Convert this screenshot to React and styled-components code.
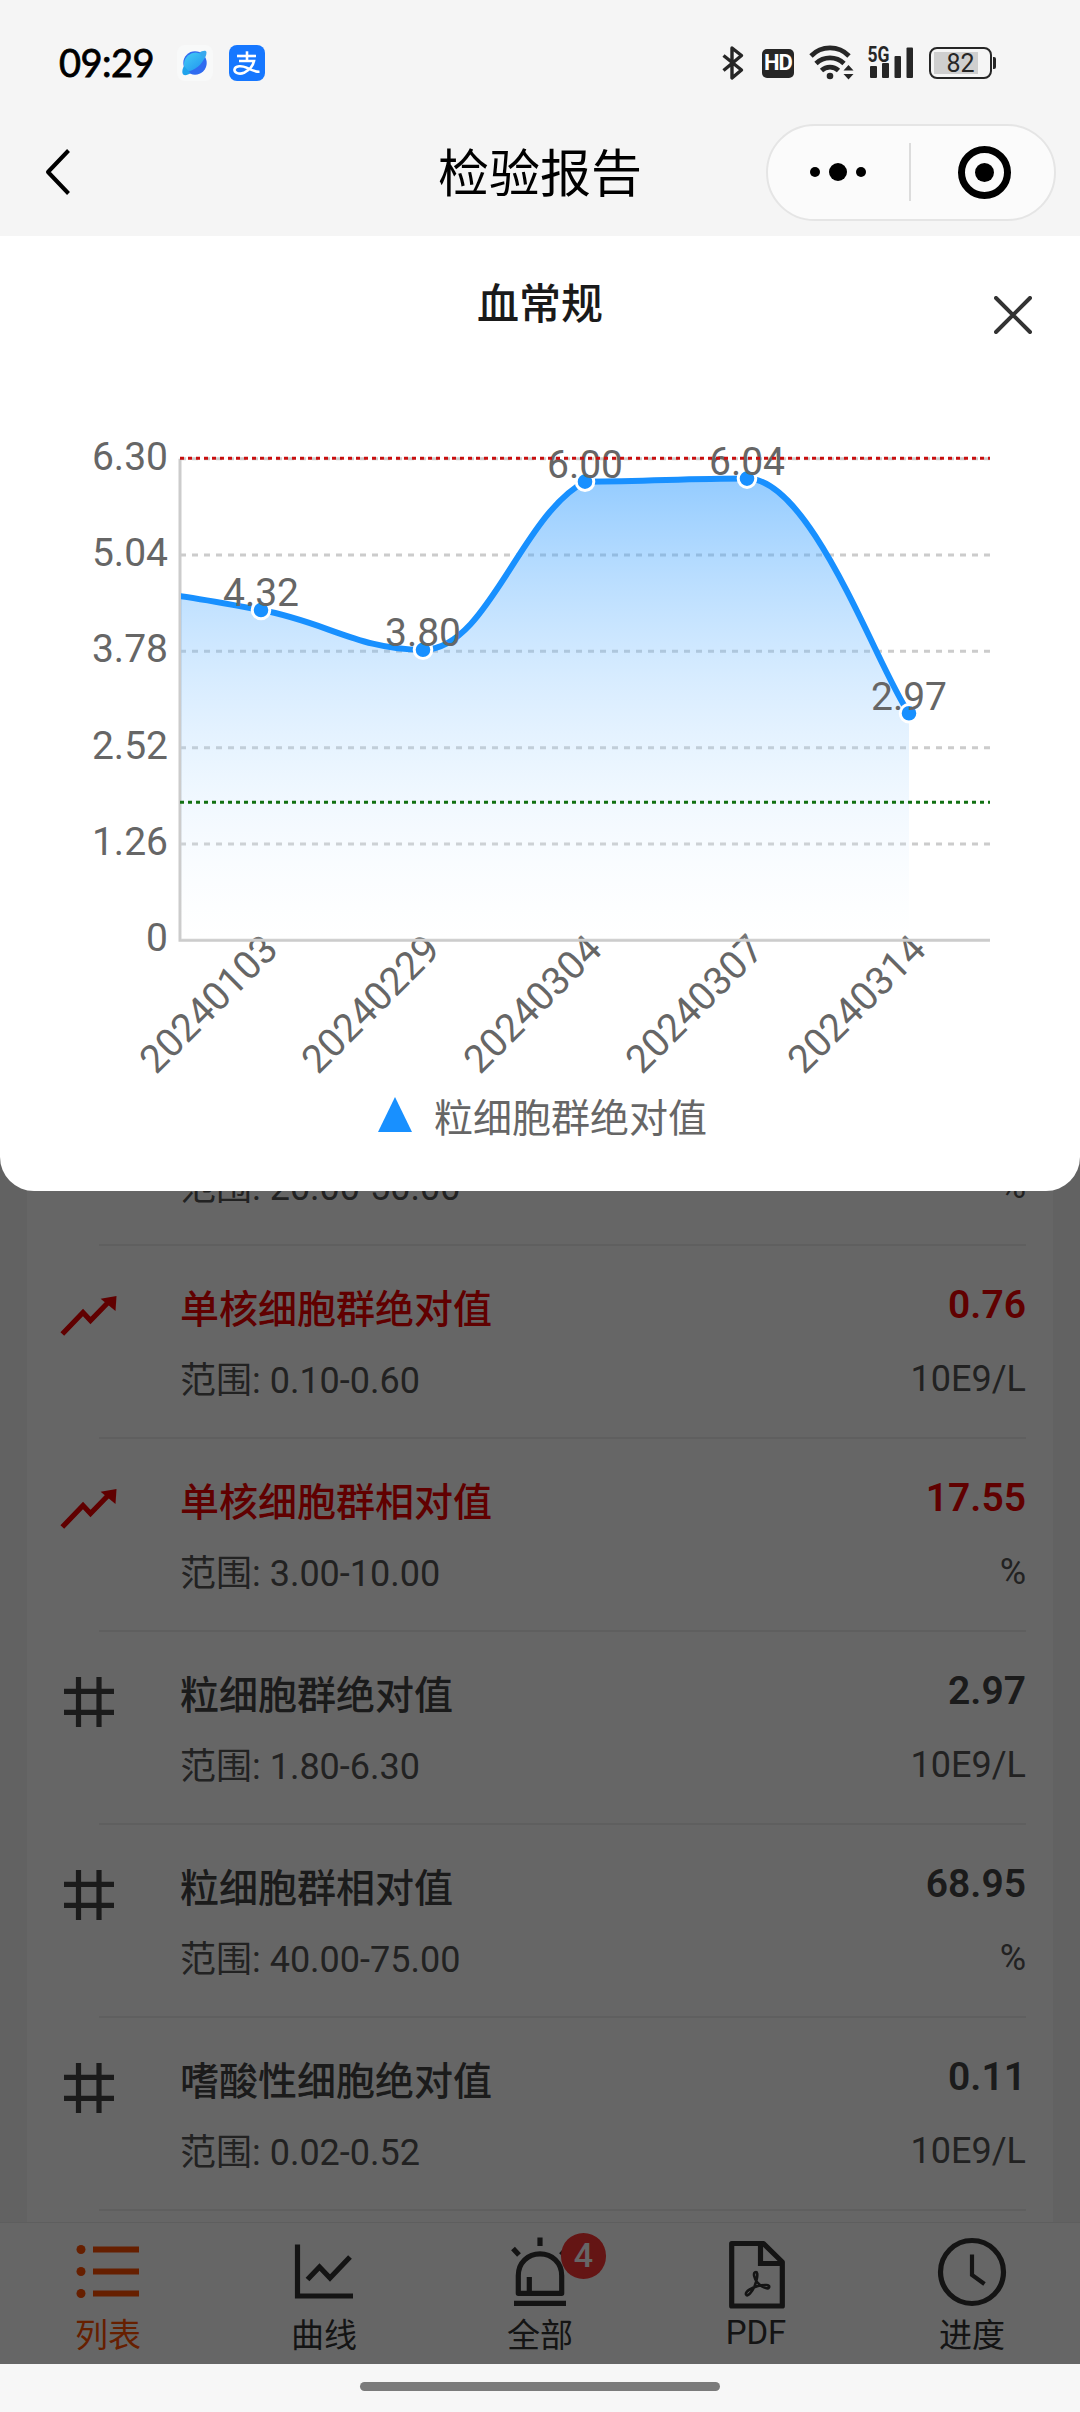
import React from "react";
import styled, { createGlobalStyle } from "styled-components";

const tests = [
  { range: "20.00-50.00", unit: "%" },
  { name: "单核细胞群绝对值", range: "0.10-0.60", value: "0.76", unit: "10E9/L", high: true },
  { name: "单核细胞群相对值", range: "3.00-10.00", value: "17.55", unit: "%", high: true },
  { name: "粒细胞群绝对值", range: "1.80-6.30", value: "2.97", unit: "10E9/L" },
  { name: "粒细胞群相对值", range: "40.00-75.00", value: "68.95", unit: "%" },
  { name: "嗜酸性细胞绝对值", range: "0.02-0.52", value: "0.11", unit: "10E9/L" },
];

const history = [
  { date: "20240103", value: 4.32 },
  { date: "20240229", value: 3.8 },
  { date: "20240304", value: 6.0 },
  { date: "20240307", value: 6.04 },
  { date: "20240314", value: 2.97 },
];

const ticks = ["0", "1.26", "2.52", "3.78", "5.04", "6.30"];

// chart area, in svg units
const LEFT = 180;
const RIGHT = 990;
const TOP = 58.7;
const BOTTOM = 540.3;

const yOf = (v) => BOTTOM - (v / 6.3) * (BOTTOM - TOP);
const xOf = (i) => LEFT + 81 + i * 162;

// the point before the first one is scrolled out, but its curve still shows
const curvePoints = [
  { x: xOf(-1), y: 191 },
  ...history.map((d, i) => ({ x: xOf(i), y: yOf(d.value) })),
];

const isPeak = (points, i) => {
  const prev = points[i - 1];
  const next = points[i + 1];
  if (!prev || !next) return false;
  const { y } = points[i];
  return y >= Math.max(prev.y, next.y) || y <= Math.min(prev.y, next.y);
};

const buildCurve = (points) => {
  let d = `M${points[0].x} ${points[0].y}`;
  for (let i = 0; i < points.length - 1; i++) {
    const p0 = points[i - 1] || { x: points[0].x - 162, y: points[0].y };
    const p1 = points[i];
    const p2 = points[i + 1];
    const p3 = points[i + 2] || p2;
    const outside = (y) => y >= Math.max(p1.y, p2.y) || y <= Math.min(p1.y, p2.y);

    const ax = p1.x + (p2.x - p0.x) * 0.2;
    const bx = p2.x - (p3.x - p1.x) * 0.2;
    let ay = p1.y + (p2.y - p0.y) * 0.2;
    let by = p2.y - (p3.y - p1.y) * 0.2;
    // no overshoot above or below the two points
    if (i === 0 || isPeak(points, i) || outside(ay)) ay = p1.y;
    if (isPeak(points, i + 1) || outside(by)) by = p2.y;

    d += ` C${ax} ${ay} ${bx} ${by} ${p2.x} ${p2.y}`;
  }
  return d;
};

const TrendChart = () => {
  const line = buildCurve(curvePoints);
  const first = curvePoints[0];

  return (
    <ChartSvg viewBox="0 0 1080 685">
      <defs>
        <linearGradient id="area" gradientUnits="userSpaceOnUse" x1="0" x2="0" y1={TOP} y2={BOTTOM}>
          <stop offset="0" stopColor="#1890ff" stopOpacity="0.5" />
          <stop offset="1" stopColor="#fff" stopOpacity="0.1" />
        </linearGradient>
        <clipPath id="plot">
          <rect x={LEFT + 1} y="0" width={RIGHT - LEFT} height={BOTTOM} />
        </clipPath>
      </defs>

      {history.map((d, i) => (
        <ChartText
          key={d.date}
          textAnchor="end"
          transform={`translate(${xOf(i) + 19} 551.500) rotate(-45)`}
        >
          {d.date}
        </ChartText>
      ))}

      {ticks.map((t, i) => (
        <g key={t}>
          {i > 0 && (
            <line
              x1={LEFT}
              x2={RIGHT}
              y1={yOf(i * 1.26)}
              y2={yOf(i * 1.26)}
              stroke="#ccc"
              strokeWidth="3"
              strokeDasharray="6 6"
            />
          )}
          <ChartText x="168" y={yOf(i * 1.26) + 11} textAnchor="end">
            {t}
          </ChartText>
        </g>
      ))}
      <path d={`M${LEFT} ${TOP}V${BOTTOM}H${RIGHT}`} fill="none" stroke="#ccc" strokeWidth="3" />

      <g clipPath="url(#plot)">
        <path d={`${line} V${BOTTOM} H${first.x} Z`} fill="url(#area)" />
        <path d={line} fill="none" stroke="#1890ff" strokeWidth="6" />
      </g>
      {curvePoints.slice(1).map((p) => (
        <circle key={p.x} cx={p.x} cy={p.y} r="8.8" fill="#1890ff" stroke="#fff" strokeWidth="3" />
      ))}
      {history.map((d, i) => (
        <ChartText key={d.date} x={xOf(i)} y={yOf(d.value) - 3.7} textAnchor="middle">
          {d.value.toFixed(2)}
        </ChartText>
      ))}

      <line x1={LEFT} x2={RIGHT} y1="58.3" y2="58.3" stroke="#c80f0f" strokeWidth="3" strokeDasharray="4 4" />
      <line x1={LEFT} x2={RIGHT} y1="402.3" y2="402.3" stroke="#127012" strokeWidth="3" strokeDasharray="4 4" />
    </ChartSvg>
  );
};

const PlanetIcon = () => (
  <AppIcon viewBox="0 0 36 36">
    <defs>
      <linearGradient id="planet" x1="0" y1="0" x2="0.8" y2="1">
        <stop offset="0" stopColor="#45ccf5" />
        <stop offset="1" stopColor="#2196f0" />
      </linearGradient>
    </defs>
    <rect width="36" height="36" rx="8" fill="#f8f9f9" />
    <circle cx="18" cy="18" r="11.7" fill="#2f6bf0" />
    <path d="M28 12A11.7 11.7 0 1 0 9.6 27C18 25.500 25 19.500 28 12Z" fill="url(#planet)" />
    <path d="M22 8C25 5.800 29.500 4.800 29.500 7.500C29.500 10 28.500 12.200 27 14Z" fill="#38a9ee" />
    <path d="M7 21C5.200 24 4.700 28 6.200 29.500C8 31 11 29.800 13.500 28.300Z" fill="#1fa3ec" />
  </AppIcon>
);

const PayIcon = () => (
  <AppIcon viewBox="0 0 36 36">
    <rect width="36" height="36" rx="8" fill="#1677ff" />
    <g fill="none" stroke="#fff" strokeWidth="2.6">
      <path d="M18 6.300V16.500" />
      <path d="M8 11H27" />
      <path d="M10 16H25C24 21 19.500 25.500 15 27.800C10 30 5 27.500 5.500 24.500C6.200 20.500 13 20.500 17.500 22.600C22 24.800 26 27 30.500 26.800" />
    </g>
  </AppIcon>
);

const BluetoothIcon = () => (
  <svg width="22" height="36" viewBox="0 0 22 36">
    <path
      d="M1.500 10.500L19.500 25L10 33V3L19.500 10.500L1.500 25.500"
      fill="none"
      stroke="#262626"
      strokeWidth="3.4"
      strokeLinejoin="round"
    />
  </svg>
);

const WifiIcon = () => (
  <svg width="46" height="36" viewBox="0 0 46 36">
    <g fill="none" stroke="#262626" strokeWidth="4.7">
      <path d="M2 11A26.500 26.500 0 0 1 40 11" />
      <path d="M7 18.500A20 20 0 0 1 35 18.500" />
      <path d="M12.500 25.500A12.500 12.500 0 0 1 29.500 25.500" />
    </g>
    <circle cx="21" cy="31" r="3.3" fill="#262626" />
    <path d="M34.500 25.500L39.500 20L44.500 25.500ZM34.500 29L39.500 34.500L44.500 29Z" fill="#262626" />
  </svg>
);

const SignalIcon = () => (
  <svg width="47" height="44" viewBox="0 -8 47 44">
    <NetText x="0.5" y="16.5" textLength="22" lengthAdjust="spacingAndGlyphs">
      5G
    </NetText>
    <g fill="#262626">
      <rect x="3" y="21" width="7" height="12" rx="1" />
      <rect x="15" y="18" width="7" height="15" rx="1" />
      <rect x="27.5" y="11" width="6.5" height="22" rx="1" />
      <rect x="39.5" y="2.5" width="6.5" height="30.5" rx="1" />
    </g>
  </svg>
);

const TrendUpIcon = () => (
  <svg width="58" height="44" viewBox="0 0 58 44">
    <path d="M2.300 40L23 18.500L30.500 26.500L49 7.500" fill="none" stroke="#f00000" strokeWidth="5.2" />
    <path d="M40.600 4.700L56.500 2L55.500 17Z" fill="#f00000" />
  </svg>
);

const HashIcon = () => (
  <svg width="50" height="50" viewBox="0 0 50 50">
    <path d="M14.500 0V50M35 0V50M0 14.300H50M0 35.300H50" fill="none" stroke="#444" strokeWidth="5.2" />
  </svg>
);

const ListIcon = () => (
  <TabSvg viewBox="0 0 76 80" stroke="#ff4e00">
    <path d="M23 21.500H69M23 43.500H69M23 65.500H69" strokeWidth="6.2" />
    <g fill="#ff4e00" stroke="none">
      <circle cx="11" cy="21.5" r="4.5" />
      <circle cx="11" cy="43.5" r="4.5" />
      <circle cx="11" cy="65.5" r="4.5" />
    </g>
  </TabSvg>
);

const CurveIcon = () => (
  <TabSvg viewBox="0 0 76 80">
    <path d="M11.500 16.500V68H67" />
    <path d="M21.500 51.500L33.500 39L44 50L64 29" />
  </TabSvg>
);

const AlarmIcon = () => (
  <TabSvg viewBox="0 0 76 80">
    <path
      d="M16.300 65.300V47.500C16.300 34.500 26 25.800 38 25.800C50 25.800 59.700 34.500 59.700 47.500V65.300Z"
      strokeLinejoin="round"
    />
    <path d="M27.300 49V65M12 75.300H64M38 9.500V18M11 20.500L17 27M59 27L65 20.500" />
  </TabSvg>
);

const PdfIcon = () => (
  <TabSvg viewBox="0 0 76 80">
    <path d="M13.700 15.500H45.500L64.300 34V78H13.700Z" strokeLinejoin="round" />
    <path d="M42.500 16V35.500H64" />
    <path
      d="M38 44C34.500 44 36 50.500 39.500 54.500C43 58.500 49.500 62 51 59.500C52.500 56.500 46 56.500 40 58C34 59.500 27 63.500 28 66.500C29.500 69.500 34 64 36.500 58.500C39 52.500 40.500 44 38 44Z"
      strokeWidth="2.6"
    />
  </TabSvg>
);

const ClockIcon = () => (
  <TabSvg viewBox="0 0 76 80">
    <circle cx="38" cy="44" r="31.5" />
    <path d="M38 26.500V47L50.500 56" strokeWidth="4.2" />
  </TabSvg>
);

const tabs = [
  { label: "列表", icon: ListIcon, active: true },
  { label: "曲线", icon: CurveIcon },
  { label: "全部", icon: AlarmIcon, badge: 4 },
  { label: "PDF", icon: PdfIcon },
  { label: "进度", icon: ClockIcon },
];

const App = () => {
  return (
    <Screen>
      <GlobalStyle />

      <StatusBar>
        <Time>09:29</Time>
        <PlanetIcon />
        <PayIcon />
        <StatusIcons>
          <BluetoothIcon />
          <HdTag>HD</HdTag>
          <WifiWrap>
            <WifiIcon />
          </WifiWrap>
          <SignalWrap>
            <SignalIcon />
          </SignalWrap>
          <Battery>
            <BatteryBody>82</BatteryBody>
            <BatteryCap />
          </Battery>
        </StatusIcons>
      </StatusBar>

      <NavBar>
        <BackIcon viewBox="0 0 28 50">
          <path d="M24.500 3.500L4 25L24.500 46.500" fill="none" stroke="#000" strokeWidth="4" strokeLinejoin="round" />
        </BackIcon>
        <NavTitle>检验报告</NavTitle>
        <Capsule>
          <CapsuleButton>
            <Dot $size={10} />
            <Dot $size={18} />
            <Dot $size={10} />
          </CapsuleButton>
          <CapsuleLine />
          <CapsuleButton $shift={4}>
            <Ring>
              <Dot $size={19} />
            </Ring>
          </CapsuleButton>
        </Capsule>
      </NavBar>

      <Body>
        <ListArea>
          <Card>
            {tests.map((t) => (
              <React.Fragment key={t.range}>
                <Row>
                  <RowIcon $high={t.high}>
                    {t.name && (t.high ? <TrendUpIcon /> : <HashIcon />)}
                  </RowIcon>
                  <Info>
                    <Name $high={t.high}>{t.name}</Name>
                    <Range>范围: {t.range}</Range>
                  </Info>
                  <Result>
                    <Value $high={t.high}>{t.value}</Value>
                    <Unit>{t.unit}</Unit>
                  </Result>
                </Row>
                <Divider />
              </React.Fragment>
            ))}
          </Card>
        </ListArea>

        <TabBar>
          {tabs.map(({ label, icon: Icon, active, badge }) => (
            <Tab key={label} $active={active}>
              <Icon />
              {badge && <Badge>{badge}</Badge>}
              <TabLabel $latin={label === "PDF"}>{label}</TabLabel>
            </Tab>
          ))}
        </TabBar>

        <Mask />

        <Sheet>
          <SheetHeader>
            <SheetTitle>血常规</SheetTitle>
            <CloseIcon viewBox="0 0 38 38">
              <path d="M2 2L36 36M36 2L2 36" stroke="#333" strokeWidth="4" strokeLinecap="round" />
            </CloseIcon>
          </SheetHeader>
          <TrendChart />
          <Legend>
            <LegendMark viewBox="0 0 34 35">
              <path d="M17 0L34 35H0Z" fill="#1890ff" />
            </LegendMark>
            粒细胞群绝对值
          </Legend>
        </Sheet>
      </Body>

      <HomeBar>
        <HomeHandle />
      </HomeBar>
    </Screen>
  );
};

export default App;

const GlobalStyle = createGlobalStyle`
  * {
    box-sizing: border-box;
  }

  body {
    margin: 0;
    font-family: Roboto, "Noto Sans CJK SC", sans-serif;
  }

  svg {
    display: block;
    flex-shrink: 0;
  }
`;

const Screen = styled.div`
  width: 1080px;
  height: 2412px;
  display: flex;
  flex-direction: column;
  overflow: hidden;
  background: #f5f5f5;
`;

const StatusBar = styled.div`
  height: 123px;
  padding: 0 84px 0 59px;
  display: flex;
  align-items: center;
  flex-shrink: 0;
`;

const Time = styled.div`
  width: 118px;
  padding-top: 1px;
  font-family: Lato, sans-serif;
  font-size: 38px;
  font-weight: 400;
  line-height: 40px;
  letter-spacing: -0.5px;
  color: #000;
  -webkit-text-stroke: 0.8px #000;
`;

const AppIcon = styled.svg`
  width: 36px;
  height: 36px;
  margin: 3px 16px 0 0;
`;

const StatusIcons = styled.div`
  display: flex;
  align-items: center;
  margin-left: auto;
  margin-top: 2px;
`;

const HdTag = styled.div`
  width: 32px;
  height: 29px;
  margin-left: 18px;
  margin-top: 1px;
  border-radius: 5px;
  background: #262626;
  color: #fff;
  font-size: 22px;
  font-weight: 700;
  line-height: 28px;
  text-align: center;
  letter-spacing: -1px;
`;

const WifiWrap = styled.div`
  margin: 0 12px 0 15px;
`;

const SignalWrap = styled.div`
  margin-top: -8px;
`;

const NetText = styled.text`
  font-size: 22px;
  font-weight: 700;
  fill: #262626;
`;

const Battery = styled.div`
  display: flex;
  align-items: center;
  gap: 1px;
  margin-left: 15px;
`;

const BatteryBody = styled.div`
  width: 63px;
  height: 32px;
  border: 2px solid #262626;
  border-radius: 8px;
  padding: 3px;
  background: linear-gradient(#cfcfcf, #cfcfcf) 3px 3px / 44px 22px no-repeat;
  font-size: 25px;
  line-height: 23px;
  text-align: center;
  color: #262626;
`;

const BatteryCap = styled.div`
  width: 3px;
  height: 12px;
  border-radius: 0 2px 2px 0;
  background: #262626;
`;

const NavBar = styled.div`
  height: 113px;
  padding: 0 24px 15px 44px;
  display: grid;
  grid-template-columns: 290px 1fr 290px;
  align-items: center;
  flex-shrink: 0;
`;

const BackIcon = styled.svg`
  width: 28px;
  height: 50px;
`;

const NavTitle = styled.div`
  margin-left: -20px;
  padding-top: 5px;
  font-size: 51px;
  line-height: 60px;
  text-align: center;
  color: #000;
`;

const Capsule = styled.div`
  width: 290px;
  height: 97px;
  border: 2px solid #e5e5e5;
  border-radius: 49px;
  background: #fbfbfb;
  display: flex;
  align-items: center;
`;

const CapsuleButton = styled.div`
  flex: 1;
  padding-left: ${({ $shift = 0 }) => $shift}px;
  display: flex;
  align-items: center;
  justify-content: center;
  gap: 9px;
`;

const CapsuleLine = styled.div`
  width: 2px;
  height: 58px;
  margin-left: 2px;
  background: #dcdcdc;
`;

const Dot = styled.div`
  width: ${({ $size }) => $size}px;
  height: ${({ $size }) => $size}px;
  border-radius: 50%;
  background: #000;
`;

const Ring = styled.div`
  width: 53px;
  height: 53px;
  border: 7px solid #000;
  border-radius: 50%;
  display: flex;
  align-items: center;
  justify-content: center;
`;

const Body = styled.div`
  flex: 1;
  min-height: 0;
  position: relative;
  display: flex;
  flex-direction: column;
`;

const ListArea = styled.div`
  flex: 1;
  min-height: 0;
  padding: 0 27px;
  display: flex;
`;

const Card = styled.div`
  flex: 1;
  display: flex;
  flex-direction: column;
  justify-content: flex-end;
  padding: 0 27px 11px 0;
  background: #fff;
`;

const Row = styled.div`
  height: 191px;
  display: flex;
`;

const RowIcon = styled.div`
  width: 153px;
  padding: ${({ $high }) => ($high ? "48px 0 0 33px" : "45px 0 0 37px")};
`;

const Info = styled.div`
  flex: 1;
  padding-top: 37px;
`;

const Name = styled.div`
  height: 54px;
  font-size: 39px;
  font-weight: 500;
  line-height: 54px;
  color: ${({ $high }) => ($high ? "#f00000" : "#444")};
`;

const Range = styled.div`
  margin-top: 17px;
  font-size: 36px;
  line-height: 54px;
  color: #555;
`;

const Result = styled.div`
  padding-top: 32px;
  text-align: right;
`;

const Value = styled.div`
  height: 54px;
  font-size: 39px;
  font-weight: 600;
  line-height: 54px;
  color: ${({ $high }) => ($high ? "#f00000" : "#444")};
`;

const Unit = styled.div`
  margin-top: 20px;
  font-size: 36px;
  line-height: 54px;
  color: #555;
`;

const Divider = styled.div`
  height: 2px;
  flex-shrink: 0;
  margin-left: 72px;
  background: #eee;
`;

const TabBar = styled.div`
  height: 142px;
  flex-shrink: 0;
  display: grid;
  grid-template-columns: repeat(5, 1fr);
  border-top: 1px solid #eaeaea;
  background: #fff;
`;

const Tab = styled.div`
  position: relative;
  padding-top: 4px;
  display: flex;
  flex-direction: column;
  align-items: center;
  font-size: 33px;
  line-height: 40px;
  color: ${({ $active }) => ($active ? "#ff4e00" : "#333")};
`;

const TabLabel = styled.span`
  margin-top: ${({ $latin }) => ($latin ? 4 : 7)}px;
`;

const TabSvg = styled.svg.attrs(({ stroke }) => ({
  fill: "none",
  stroke: stroke || "#333",
  strokeWidth: 5.2,
}))`
  width: 76px;
  height: 82px;
`;

const Badge = styled.div`
  position: absolute;
  top: 10px;
  left: 129px;
  width: 45px;
  height: 46px;
  border-radius: 23px;
  background: #fa3534;
  color: #fff;
  font-size: 34px;
  font-weight: 500;
  line-height: 44px;
  text-align: center;
`;

const Mask = styled.div`
  position: absolute;
  inset: 0;
  background: rgba(0, 0, 0, 0.6);
`;

const Sheet = styled.div`
  position: absolute;
  top: 0;
  left: 0;
  right: 0;
  height: 955px;
  border-radius: 0 0 34px 34px;
  background: #fff;
`;

const SheetHeader = styled.div`
  height: 164px;
  padding: 39px 48px 0;
  display: grid;
  grid-template-columns: 1fr auto 1fr;
  align-items: start;
`;

const SheetTitle = styled.div`
  grid-column: 2;
  font-size: 42px;
  font-weight: 500;
  line-height: 60px;
  color: #1a1a1a;
`;

const CloseIcon = styled.svg`
  justify-self: end;
  width: 38px;
  height: 38px;
  margin-top: 21px;
`;

const ChartSvg = styled.svg`
  width: 1080px;
  height: 685px;
`;

const ChartText = styled.text`
  font-size: 39px;
  fill: #666;
`;

const Legend = styled.div`
  height: 68px;
  padding-left: 5px;
  display: flex;
  align-items: center;
  justify-content: center;
  gap: 22px;
  font-size: 39px;
  line-height: 68px;
  color: #666;
`;

const LegendMark = styled.svg`
  width: 34px;
  height: 35px;
  margin-top: -10px;
`;

const HomeBar = styled.div`
  height: 48px;
  flex-shrink: 0;
  display: flex;
  justify-content: center;
  padding-top: 18px;
  background: #f7f7f7;
`;

const HomeHandle = styled.div`
  width: 360px;
  height: 9px;
  border-radius: 5px;
  background: #7b7b7b;
`;
